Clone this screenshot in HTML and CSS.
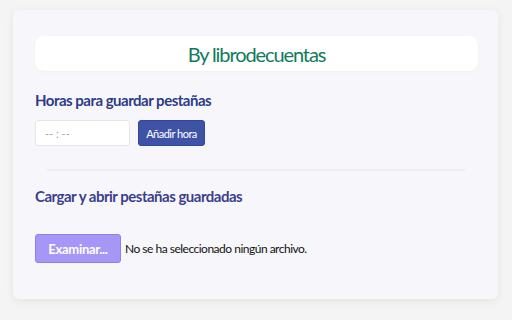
FILE: index.html
```html
<!DOCTYPE html>
<html lang="es">
<head>
<meta charset="utf-8">
<link rel="stylesheet" href="styles.css">
</head>
<body>
<div class="card">
  <div class="brand">By librodecuentas</div>
  <h2 class="title t1">Horas para guardar pestañas</h2>
  <div class="row">
    <div class="time">-- : --</div>
    <button class="add">Añadir hora</button>
  </div>
  <div class="divider"></div>
  <h2 class="title t2">Cargar y abrir pestañas guardadas</h2>
  <div class="file">
    <span class="browse">Examinar...</span>
    <span class="none">No se ha seleccionado ningún archivo.</span>
  </div>
</div>
</body>
</html>
```
FILE: styles.css
```css
html, body { margin: 0; padding: 0; }
body {
  background: #f4f4f5;
  width: 512px;
  height: 320px;
  padding: 10px 14px 0 13px;
  box-sizing: border-box;
  font-family: Lato, "Open Sans", sans-serif;
}
.card {
  background: #f7f7fb;
  border-radius: 6px;
  box-shadow: 0 2px 8px rgba(0,0,0,0.07);
  height: 289px;
  box-sizing: border-box;
  padding: 26px 20px 0 22px;
}
.brand {
  background: #ffffff;
  border-radius: 9px;
  height: 35px;
  display: flex;
  align-items: center;
  justify-content: center;
  color: #0f7a5c;
  font-size: 20px;
  letter-spacing: -1.1px;
  padding-top: 1px;
  box-sizing: border-box;
  box-shadow: 0 1px 3px rgba(0,0,0,0.03);
}
.title {
  margin: 0;
  font-weight: 700;
  font-size: 15px;
  letter-spacing: -0.5px;
}
.t1 { color: #2d3c88; margin-top: 20px; line-height: 18px; }
.t2 { color: #3b3f8c; margin-top: 16px; line-height: 18px; }
.row {
  display: flex;
  gap: 8px;
  margin-top: 11px;
}
.time {
  width: 95px;
  height: 26px;
  box-sizing: border-box;
  background: #fff;
  border: 1px solid #e6e6ea;
  border-radius: 3px;
  color: #a4a4aa;
  font-size: 11px;
  padding-left: 9px;
  display: flex;
  align-items: center;
}
.add {
  height: 26px;
  width: 67px;
  background: #3f53a6;
  color: #fff;
  border: 1px solid #34479a;
  border-radius: 3px;
  font-family: inherit;
  font-size: 11px;
  letter-spacing: -0.5px;
  padding: 0;
}
.divider {
  height: 2px;
  background: #ececf1;
  margin: 23px 13px 0 12px;
}
.file {
  display: flex;
  align-items: center;
  gap: 4px;
  margin-top: 29px;
}
.browse {
  width: 86px;
  height: 29px;
  box-sizing: border-box;
  background: #a697f6;
  border: 1px solid #8f7fee;
  border-radius: 3px;
  color: #fff;
  font-weight: 700;
  font-size: 13px;
  display: flex;
  align-items: center;
  justify-content: center;
  letter-spacing: -0.3px;
}
.none {
  color: #111;
  font-size: 12px;
  letter-spacing: -0.5px;
}
```
